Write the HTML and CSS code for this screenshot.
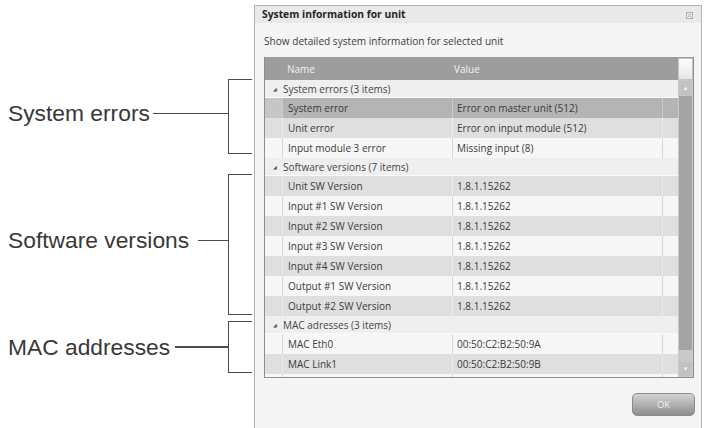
FILE: index.html
```
<!DOCTYPE html>
<html>
<head>
<meta charset="utf-8"/>
<title>System information for unit</title>
<link rel="stylesheet" href="styles.css">
</head>
<body>
<div class="page">

<div class="notes">
  <div class="note note-errors">
    <span class="note-label">System errors</span>
    <span class="note-line"></span>
    <span class="note-bracket"></span>
  </div>
  <div class="note note-versions">
    <span class="note-label">Software versions</span>
    <span class="note-line"></span>
    <span class="note-bracket"></span>
  </div>
  <div class="note note-mac">
    <span class="note-label">MAC addresses</span>
    <span class="note-line"></span>
    <span class="note-bracket"></span>
  </div>
</div>

<div class="dialog">
  <div class="titlebar">
    <span class="title">System information for unit</span>
    <svg class="close" width="7" height="7" viewBox="0 0 7 7">
      <rect x="0.5" y="0.5" width="6" height="6" fill="none" stroke="#b4b4b4"/>
      <path d="M1.5 1.5 L5.5 5.5 M5.5 1.5 L1.5 5.5" stroke="#b4b4b4"/>
    </svg>
  </div>

  <div class="dialog-body">
    <p class="desc">Show detailed system information for selected unit</p>

    <div class="grid">
      <div class="grid-main">
        <div class="grid-head">
          <span class="c-indent"></span>
          <span class="c-name">Name</span>
          <span class="c-value">Value</span>
          <span class="c-extra"></span>
        </div>
        <div class="grid-rows">
          <div class="group"><span class="arrow">&#9698;</span>System errors (3 items)</div>
          <div class="row selected"><span class="c-indent"></span><span class="c-name">System error</span><span class="c-value">Error on master unit (512)</span><span class="c-extra"></span></div>
          <div class="row dark"><span class="c-indent"></span><span class="c-name">Unit error</span><span class="c-value">Error on input module (512)</span><span class="c-extra"></span></div>
          <div class="row"><span class="c-indent"></span><span class="c-name">Input module 3 error</span><span class="c-value">Missing input (8)</span><span class="c-extra"></span></div>

          <div class="group"><span class="arrow">&#9698;</span>Software versions (7 items)</div>
          <div class="row dark"><span class="c-indent"></span><span class="c-name">Unit SW Version</span><span class="c-value">1.8.1.15262</span><span class="c-extra"></span></div>
          <div class="row"><span class="c-indent"></span><span class="c-name">Input #1 SW Version</span><span class="c-value">1.8.1.15262</span><span class="c-extra"></span></div>
          <div class="row dark"><span class="c-indent"></span><span class="c-name">Input #2 SW Version</span><span class="c-value">1.8.1.15262</span><span class="c-extra"></span></div>
          <div class="row"><span class="c-indent"></span><span class="c-name">Input #3 SW Version</span><span class="c-value">1.8.1.15262</span><span class="c-extra"></span></div>
          <div class="row dark"><span class="c-indent"></span><span class="c-name">Input #4 SW Version</span><span class="c-value">1.8.1.15262</span><span class="c-extra"></span></div>
          <div class="row"><span class="c-indent"></span><span class="c-name">Output #1 SW Version</span><span class="c-value">1.8.1.15262</span><span class="c-extra"></span></div>
          <div class="row dark"><span class="c-indent"></span><span class="c-name">Output #2 SW Version</span><span class="c-value">1.8.1.15262</span><span class="c-extra"></span></div>

          <div class="group"><span class="arrow">&#9698;</span>MAC adresses (3 items)</div>
          <div class="row"><span class="c-indent"></span><span class="c-name">MAC Eth0</span><span class="c-value">00:50:C2:B2:50:9A</span><span class="c-extra"></span></div>
          <div class="row dark"><span class="c-indent"></span><span class="c-name">MAC Link1</span><span class="c-value">00:50:C2:B2:50:9B</span><span class="c-extra"></span></div>
          <div class="row"><span class="c-indent"></span><span class="c-name"></span><span class="c-value"></span><span class="c-extra"></span></div>
        </div>
      </div>

      <div class="scrollbar">
        <div class="sb-corner"></div>
        <div class="sb-btn">&#9652;</div>
        <div class="sb-track"><div class="sb-thumb"></div></div>
        <div class="sb-btn">&#9662;</div>
      </div>
    </div>

    <div class="actions">
      <button class="ok">OK</button>
    </div>
  </div>
</div>

</div>
</body>
</html>
```

FILE: styles.css
```
body {
   margin: 0;
   background-color: white;
   font-family: "Open Sans", "DejaVu Sans", sans-serif;
}

.page {
   display: flex;
   align-items: flex-start;
   height: 428px;
   overflow: hidden;
}

/* annotations on the left */

.notes {
   width: 254px;
   padding-top: 79px;
   display: flex;
   flex-direction: column;
}

.note {
   display: flex;
   align-items: center;
   padding-left: 8px;
   padding-right: 2px;
}

.note-errors { height: 75px; }
.note-versions { height: 141px; margin-top: 20px; }
.note-mac { height: 52px; margin-top: 6px; }

.note-label {
   font-family: "Liberation Sans", Arial, sans-serif;
   font-size: 22.8px;
   color: #383838;
}

.note-errors .note-label { margin-top: -6px; }
.note-versions .note-label { margin-top: -8px; }

.note-line {
   flex: 1;
   height: 1.5px;
   margin-left: 5px;
   background-color: #4a4a4a;
}

.note-errors .note-line { margin-top: -6px; margin-left: 3px; }
.note-versions .note-line { margin-top: -8px; margin-left: 9px; }

.note-bracket {
   align-self: stretch;
   width: 23px;
   border: 1.5px solid #4a4a4a;
   border-right: none;
}

/* dialog */

.dialog {
   margin-top: 5px;
   width: 446px;
   height: 440px;
   border: 1px solid #b2b2b2;
   background-color: #f5f5f5;
   color: #3a3a3a;
   font-size: 10px;
}

.titlebar {
   display: flex;
   align-items: center;
   justify-content: space-between;
   height: 17px;
   padding: 0 8px 0 7px;
   background-color: #e9e9e9;
}

.title {
   font-weight: bold;
   font-size: 10.3px;
   color: #252525;
   margin-top: -1px;
}

.close {
   margin-top: 2px;
}

.dialog-body {
   padding: 0 6px 0 9px;
}

.desc {
   margin: 0;
   height: 34px;
   line-height: 36px;
   font-size: 10.1px;
   color: #3c3c3c;
}

.grid {
   display: flex;
   width: 428px;
   border: 1px solid #8e8e8e;
   border-top-color: #9a9a9a;
}

.grid-main {
   width: 413px;
}

.grid-head {
   display: flex;
   height: 22px;
   align-items: center;
   background-color: #9d9d9d;
   color: #f2f2f2;
}

.grid-rows {
   height: 297px;
   overflow: hidden;
}

.c-indent { width: 17px; flex: none; }
.c-name { width: 165px; padding-left: 5px; flex: none; }
.c-value { width: 206px; padding-left: 5px; flex: none; }
.c-extra { width: 15px; flex: none; }

.grid-head .c-name { padding-left: 5px; }
.grid-head .c-value { padding-left: 2px; }

.group {
   display: flex;
   align-items: center;
   height: 18px;
   background-color: #efefef;
   color: #444;
   border-bottom: 1px solid #fafafa;
   box-sizing: border-box;
}

.arrow {
   width: 18px;
   padding-left: 8px;
   box-sizing: border-box;
   font-size: 5px;
   color: #555;
}

.row {
   display: flex;
   align-items: center;
   height: 20px;
   background-color: #f7f7f7;
}

.row span {
   align-self: stretch;
   display: flex;
   align-items: center;
}

.row .c-name,
.row .c-value,
.row .c-extra {
   border-left: 1px solid #d6d6d6;
}

.row .c-name { width: 164px; }
.row .c-value { width: 205px; padding-left: 4px; }
.row .c-extra { width: 14px; }

.row.dark {
   background-color: #dfdfdf;
}

.row.dark .c-name,
.row.dark .c-value,
.row.dark .c-extra {
   border-left-color: #ebebeb;
}

.row.selected {
   background-color: #b4b4b4;
}

.row.selected .c-indent {
   background-color: #c6c6c6;
}

.row.selected .c-name,
.row.selected .c-value,
.row.selected .c-extra {
   border-left-color: #cacaca;
}

.scrollbar {
   width: 15px;
   display: flex;
   flex-direction: column;
   background-color: #c9c9c9;
}

.sb-corner {
   height: 22px;
   box-sizing: border-box;
   border: 1px solid #c4c4c4;
   background: linear-gradient(#fdfdfd, #e6e6e6);
}

.sb-btn {
   height: 14px;
   margin: 1px 1px;
   background-color: #c2c2c2;
   color: #f4f4f4;
   font-size: 7px;
   line-height: 14px;
   text-align: center;
}

.sb-track {
   flex: 1;
   padding: 0 1px;
}

.sb-thumb {
   height: 254px;
   background-color: #a4a4a4;
}

.actions {
   display: flex;
   justify-content: flex-end;
   padding-top: 15px;
}

.ok {
   width: 63px;
   height: 23px;
   border: 1px solid #8a8a8a;
   border-radius: 5px;
   background: linear-gradient(#d4d4d4, #b0b0b0 50%, #8e8e8e);
   color: #ececec;
   font-family: "Open Sans", "DejaVu Sans", sans-serif;
   font-size: 9.5px;
}
```
